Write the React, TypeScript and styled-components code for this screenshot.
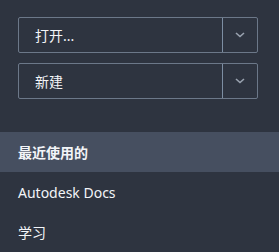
import React, { FC } from "react";
import styled, { createGlobalStyle } from "styled-components";

const GlobalStyle = createGlobalStyle`
  html, body {
    margin: 0;
    padding: 0;
    background: #2e3440;
  }
`;

const Panel = styled.div`
  width: 279px;
  height: 252px;
  background: #2e3440;
  font-family: "Noto Sans", "Noto Sans CJK SC", sans-serif;
  color: #f3f5f8;
  display: flex;
  flex-direction: column;
`;

const Actions = styled.div`
  display: flex;
  flex-direction: column;
  gap: 10px;
  padding: 17px 21px 0 18px;
`;

const SplitButton = styled.div`
  display: flex;
  height: 36px;
  border: 1px solid #6c7889;
  border-radius: 2px;
  box-sizing: border-box;
`;

const MainPart = styled.div`
  flex: 1;
  display: flex;
  align-items: center;
  padding-left: 16px;
  font-size: 14px;
  border-right: 1px solid #7d8ea3;
`;

const Caret = styled.div`
  width: 34px;
  display: flex;
  align-items: center;
  justify-content: center;
  color: #9aa3b0;
`;

const Nav = styled.div`
  margin-top: 33px;
  display: flex;
  flex-direction: column;
`;

const NavItem = styled.div<{ $active?: boolean }>`
  height: 40px;
  display: flex;
  align-items: center;
  padding-left: 18px;
  font-size: 14px;
  font-weight: ${(p) => (p.$active ? 700 : 400)};
  background: ${(p) => (p.$active ? "#464f60" : "transparent")};
`;

const Chevron: FC = () => (
  <svg width="10" height="6" viewBox="0 0 10 6">
    <path d="M1 1l4 3.5L9 1" fill="none" stroke="currentColor" strokeWidth="1.6" />
  </svg>
);

const App: FC = () => {
  return (
    <Panel>
      <GlobalStyle />
      <Actions>
        <SplitButton>
          <MainPart>打开...</MainPart>
          <Caret>
            <Chevron />
          </Caret>
        </SplitButton>
        <SplitButton>
          <MainPart>新建</MainPart>
          <Caret>
            <Chevron />
          </Caret>
        </SplitButton>
      </Actions>
      <Nav>
        <NavItem $active>最近使用的</NavItem>
        <NavItem>Autodesk Docs</NavItem>
        <NavItem>学习</NavItem>
      </Nav>
    </Panel>
  );
};

export default App;
